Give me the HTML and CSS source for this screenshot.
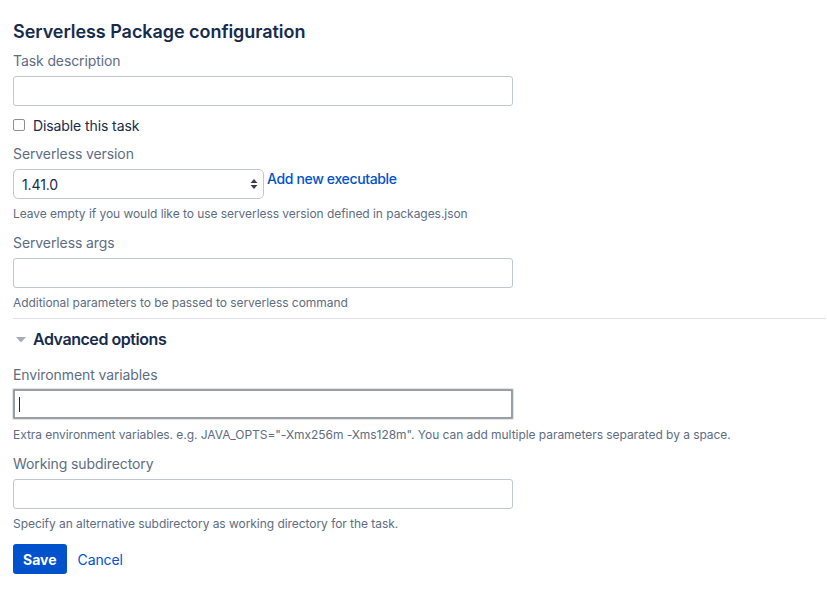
FILE: index.html
```html
<!DOCTYPE html>
<html lang="en">
<head>
<meta charset="utf-8">
<title>Serverless Package configuration</title>
<link rel="stylesheet" href="styles.css">
</head>
<body>
<form class="page">
  <h1 class="title">Serverless Package configuration</h1>

  <div class="field">
    <label class="label">Task description</label>
    <input class="text" type="text">
  </div>

  <div class="check-row">
    <span class="checkbox"></span>
    <span class="check-label">Disable this task</span>
  </div>

  <div class="field">
    <label class="label">Serverless version</label>
    <div class="select-row">
      <div class="select">
        <span class="select-value">1.41.0</span>
        <svg class="select-arrows" width="8" height="12" viewBox="0 0 8 12"><path d="M4 1 L7.5 5 L0.5 5 Z M4 11 L7.5 7 L0.5 7 Z" fill="#3b3f45"/></svg>
      </div>
      <a class="link add-link" href="#">Add new executable</a>
    </div>
    <div class="help">Leave empty if you would like to use serverless version defined in packages.json</div>
  </div>

  <div class="field">
    <label class="label">Serverless args</label>
    <input class="text" type="text">
    <div class="help">Additional parameters to be passed to serverless command</div>
  </div>

  <hr class="divider">

  <div class="adv">
    <svg class="adv-arrow" width="10" height="6" viewBox="0 0 10 6"><path d="M0 0 L10 0 L5 5.5 Z" fill="#a5adba"/></svg>
    <span class="adv-title">Advanced options</span>
  </div>

  <div class="field field-env">
    <label class="label label-env">Environment variables</label>
    <div class="text text-focus"><span class="caret"></span></div>
    <div class="help help-env">Extra environment variables. e.g. JAVA_OPTS="-Xmx256m -Xms128m". You can add multiple parameters separated by a space.</div>
  </div>

  <div class="field">
    <label class="label">Working subdirectory</label>
    <input class="text" type="text">
    <div class="help">Specify an alternative subdirectory as working directory for the task.</div>
  </div>

  <div class="buttons">
    <button class="save" type="button">Save</button>
    <a class="link cancel" href="#">Cancel</a>
  </div>
</form>
</body>
</html>
```
FILE: styles.css
```css
* { box-sizing: border-box; }
html, body { margin: 0; padding: 0; background: #fff; }
body {
  font-family: Inter, "Noto Sans", "Liberation Sans", sans-serif;
  color: #172b4d;
  font-size: 14px;
  letter-spacing: -0.1px;
}
.page {
  padding: 20px 0 0 13px;
  display: flex;
  flex-direction: column;
}
.title {
  margin: 0;
  font-size: 18px;
  line-height: 24px;
  font-weight: 600;
  letter-spacing: -0.05px;
  color: #172b4d;
}
.field {
  display: flex;
  flex-direction: column;
  margin-top: 7px;
}
.label {
  font-size: 14px;
  line-height: 20px;
  color: #5e6c84;
  margin-bottom: 5px;
}
.label-env { margin-bottom: 4px; }
.text {
  width: 500px;
  height: 30px;
  border: 1px solid #c1c7d0;
  border-radius: 3px;
  background: #fff;
  margin: 0;
  padding: 0 8px;
  font: inherit;
}
.text-focus {
  border: 2px solid #9a9ea5;
  border-radius: 1px;
  box-shadow: 0 0 1px 1px rgba(0,0,0,0.12);
  display: flex;
  align-items: center;
  padding-left: 4px;
}
.caret {
  display: block;
  width: 1px;
  height: 15px;
  background: #172b4d;
}
.check-row {
  display: flex;
  align-items: center;
  margin-top: 9px;
  height: 20px;
}
.checkbox {
  width: 12px;
  height: 12px;
  border: 1px solid #8c8f94;
  border-radius: 2px;
  background: #fff;
}
.check-label {
  margin-left: 8px;
  color: #172b4d;
}
.check-row + .field { margin-top: 9px; }
.select-row {
  display: flex;
  align-items: flex-start;
}
.select {
  width: 251px;
  height: 30px;
  border: 1px solid #c1c7d0;
  border-radius: 5px;
  display: flex;
  align-items: center;
  justify-content: space-between;
  padding: 0 5px 0 8px;
  background: #fff;
}
.select-value { font-size: 14px; color: #172b4d; }
.select-arrows { display: block; }
.link {
  color: #0052cc;
  text-decoration: none;
}
.add-link {
  margin-left: 3px;
  line-height: 20px;
  font-weight: 500;
  letter-spacing: -0.35px;
}
.help {
  font-size: 12px;
  line-height: 16px;
  color: #5e6c84;
  margin-top: 7px;
  letter-spacing: -0.05px;
}
.help-env { margin-top: 8px; }
.field + .field { margin-top: 11px; }
.divider {
  margin: 7px 0 0 0;
  border: 0;
  border-top: 1px solid #dfe1e6;
  height: 0;
  width: 813px;
}
.adv {
  display: flex;
  align-items: center;
  margin-top: 10px;
  height: 20px;
}
.adv-arrow { margin-left: 3px; margin-top: 1px; }
.adv-title {
  margin-left: 7px;
  font-size: 16px;
  font-weight: 600;
  letter-spacing: -0.45px;
  color: #172b4d;
}
.field.field-env { margin-top: 16px; }
.buttons {
  display: flex;
  align-items: center;
  margin-top: 12px;
}
.save {
  height: 30px;
  padding: 0 10px;
  border: 0;
  border-radius: 3px;
  background: #0052cc;
  color: #fff;
  font: inherit;
  font-weight: 700;
}
.cancel { margin-left: 11px; font-weight: 400; }
```
